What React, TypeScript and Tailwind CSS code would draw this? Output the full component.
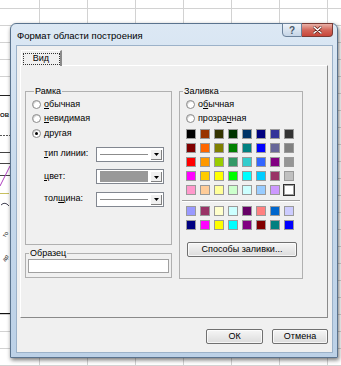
import React from "react";

const palette = [
  ["#000000", "#993300", "#333300", "#003300", "#003366", "#000080", "#333399", "#333333"],
  ["#800000", "#ff6600", "#808000", "#008000", "#008080", "#0000ff", "#666699", "#808080"],
  ["#ff0000", "#ff9900", "#99cc00", "#339966", "#33cccc", "#3366ff", "#800080", "#969696"],
  ["#ff00ff", "#ffcc00", "#ffff00", "#00ff00", "#00ffff", "#00ccff", "#993366", "#c0c0c0"],
  ["#ff99cc", "#ffcc99", "#ffff99", "#ccffcc", "#ccffff", "#99ccff", "#cc99ff", "#ffffff"],
];

const chartColors = [
  ["#9999ff", "#993366", "#ffffcc", "#ccffff", "#660066", "#ff8080", "#0066cc", "#ccccff"],
  ["#000080", "#ff00ff", "#ffff00", "#00ffff", "#800080", "#800000", "#008080", "#0000ff"],
];

function Radio({ checked, children }: { checked?: boolean; children: React.ReactNode }) {
  return (
    <div className="flex items-center h-[14.5px]">
      <span className="w-[9px] h-[9px] rounded-full border border-[#8a8a8a] bg-white shadow-[inset_1px_1px_0_#d4d4d4] flex items-center justify-center">
        {checked && <span className="w-[3px] h-[3px] rounded-full bg-black" />}
      </span>
      <span className="ml-[3px]">{children}</span>
    </div>
  );
}

function Arrow() {
  return (
    <div className="w-[12px] h-full bg-[#f0f0f0] border-l border-t border-white shadow-[inset_-1px_-1px_0_#808080] flex items-center justify-center">
      <svg width="5" height="3" viewBox="0 0 5 3">
        <polygon points="0,0 5,0 2.5,3" fill="#000" />
      </svg>
    </div>
  );
}

function Combo({ fill }: { fill?: boolean }) {
  return (
    <div className="w-[68px] h-[15px] border border-[#828790] bg-white flex p-[1px]">
      <div className="flex-1 flex items-center px-[2px]">
        {fill ? (
          <div className="w-full h-[11px] bg-[#999999]" />
        ) : (
          <div className="w-full h-px bg-[#8c8c8c]" />
        )}
      </div>
      <Arrow />
    </div>
  );
}

function Swatch({ color, selected }: { color: string; selected?: boolean }) {
  return (
    <div
      className={
        selected
          ? "w-[10px] h-[10px] border border-[#a0a0a0] outline outline-1 outline-[#333333]"
          : "w-[10px] h-[10px] border border-[#9a9a9a]"
      }
      style={{ backgroundColor: color }}
    />
  );
}

function Button({ children, className }: { children: React.ReactNode; className?: string }) {
  return (
    <div
      className={
        "h-[15px] flex items-center justify-center rounded-[2px] border border-[#707070] bg-gradient-to-b from-[#f6f6f6] to-[#dcdcdc] shadow-[inset_0_0_0_1px_rgba(255,255,255,0.7)] " +
        (className ?? "")
      }
    >
      {children}
    </div>
  );
}

// piece of the Excel chart peeking out behind the dialog
function LeftChart() {
  return (
    <svg className="absolute left-0 top-0" width="10" height="366" viewBox="0 0 10 366">
      <rect x="0" y="80" width="10" height="234" fill="#ffffff" />
      <line x1="0" y1="95.5" x2="10" y2="95.5" stroke="#222" />
      <text x="0" y="117" fontSize="6" fontWeight="bold" fontFamily="Liberation Sans, sans-serif" fill="#111">ОВ</text>
      <line x1="0" y1="135.5" x2="10" y2="135.5" stroke="#555" strokeDasharray="2 1" />
      <line x1="0" y1="152.5" x2="10" y2="152.5" stroke="#444" />
      <line x1="0" y1="163.5" x2="10" y2="163.5" stroke="#444" />
      <line x1="0" y1="175.5" x2="10" y2="175.5" stroke="#444" />
      <line x1="0" y1="186" x2="10" y2="166" stroke="#b040c0" />
      <line x1="0" y1="193.5" x2="9" y2="193.5" stroke="#c8c060" />
      <path d="M1 205 Q5 201 9 206" stroke="#445" fill="none" />
      <text x="1" y="236" fontSize="6" fontFamily="Liberation Sans, sans-serif" fill="#222" transform="rotate(-55 5 233)">то</text>
      <text x="1" y="260" fontSize="6" fontFamily="Liberation Sans, sans-serif" fill="#222" transform="rotate(-55 5 257)">ар</text>
      <line x1="0" y1="313.5" x2="10" y2="313.5" stroke="#111" />
    </svg>
  );
}

export default function App() {
  return (
    <div className="relative w-[341px] h-[366px] overflow-hidden bg-white [background-image:linear-gradient(to_right,#d2d2d2_1px,transparent_1px),linear-gradient(to_bottom,#d2d2d2_1px,transparent_1px)] [background-size:48px_17px] [background-position:39px_8px] font-['Liberation_Sans',Arial,sans-serif] text-[9px] text-black">
      <LeftChart />

      {/* Dialog window */}
      <div className="absolute left-[10px] top-[23px] w-[328px] h-[335px] rounded-t-[6px] border border-[#5a738e] bg-gradient-to-b from-[#dce8f4] via-[#c6d9ec] to-[#bcd1e7] shadow-[1px_2px_4px_rgba(0,0,0,0.55)] flex flex-col pl-[5px] pr-[4px] pb-[4px]">
        {/* Title bar */}
        <div className="h-[21px] flex items-start">
          <span className="mt-[5px] ml-px text-[9.5px] text-black">Формат области построения</span>
          <div className="ml-auto flex mt-[-1px]">
            <div className="w-[20px] h-[14px] rounded-bl-[4px] border border-[#6b819a] bg-gradient-to-b from-[#eef3f9] to-[#c5d5e6] flex items-center justify-center text-[10px] font-bold text-[#4a5868]">
              ?
            </div>
            <div className="w-[31px] h-[14px] rounded-br-[4px] border border-l-0 border-[#7a3a34] bg-gradient-to-b from-[#e8b1a8] via-[#d2665a] to-[#c8463a] flex items-center justify-center">
              <svg width="9" height="8" viewBox="0 0 9 8">
                <path d="M1 1 L8 7 M8 1 L1 7" stroke="#5b1e18" strokeWidth="2.8" strokeLinecap="round" />
                <path d="M1 1 L8 7 M8 1 L1 7" stroke="#ffffff" strokeWidth="1.6" strokeLinecap="round" />
              </svg>
            </div>
          </div>
        </div>

        {/* Client area */}
        <div className="flex-1 bg-[#f0f0f0] border border-[#9cb2c9] flex flex-col">
          {/* Tab */}
          <div className="ml-[4px] mt-[4px] w-[41px] h-[16px] border-l border-t border-white border-r-2 border-r-[#8a8a8a] bg-[#f0f0f0] relative z-10 flex items-center justify-center pt-[1px]">
            <div className="w-[37px] h-[12px] border border-dotted border-[#333] flex items-center justify-center">
              Вид
            </div>
          </div>

          {/* Tab panel */}
          <div className="ml-[3px] mt-[-1px] w-[308px] h-[253px] border border-white border-r-[#8a8a8a] border-b-[#8a8a8a] flex pl-[4px] pt-[20px]">
            {/* Left column */}
            <div className="w-[147px] flex flex-col">
              <fieldset className="h-[159px] border border-[#b0b0b0] pl-[6px]">
                <legend className="ml-[2px] px-px leading-[11px]">Рамка</legend>
                <Radio><u>о</u>бычная</Radio>
                <Radio><u>н</u>евидимая</Radio>
                <Radio checked><u>д</u>ругая</Radio>
                <div className="mt-[6px] ml-[12px] flex flex-col gap-[7.5px]">
                  <div className="flex items-center">
                    <span className="w-[52px]"><u>т</u>ип линии:</span>
                    <Combo />
                  </div>
                  <div className="flex items-center">
                    <span className="w-[52px]"><u>ц</u>вет:</span>
                    <Combo fill />
                  </div>
                  <div className="flex items-center">
                    <span className="w-[52px]">тол<u>щ</u>ина:</span>
                    <Combo />
                  </div>
                </div>
              </fieldset>

              <fieldset className="mt-[3px] h-[30px] border border-[#b0b0b0] pl-[2px]">
                <legend className="ml-[1px] px-px leading-[11px]">Образец</legend>
                <div className="w-[141px] h-[14px] border border-[#a0a0a0] bg-white" />
              </fieldset>
            </div>

            {/* Right column */}
            <fieldset className="ml-[7px] w-[124px] h-[193px] border border-[#b0b0b0]">
              <legend className="ml-[3px] px-px leading-[11px]">Заливка</legend>
              <div className="pl-[6px]">
                <Radio>о<u>б</u>ычная</Radio>
                <Radio>прозра<u>ч</u>ная</Radio>
              </div>
              <div className="ml-[6px] mt-[3px] grid grid-cols-[repeat(8,10px)] gap-[4px]">
                {palette.flat().map((c, i) => (
                  <Swatch key={i} color={c} selected={i === 39} />
                ))}
              </div>
              <div className="mx-[2px] mt-[5px] border-t border-[#a0a0a0] border-b border-b-white" />
              <div className="ml-[6px] mt-[4px] grid grid-cols-[repeat(8,10px)] gap-[4px]">
                {chartColors.flat().map((c, i) => (
                  <Swatch key={i} color={c} />
                ))}
              </div>
              <Button className="ml-[7px] mt-[12px] w-[110px]">Способы заливки...</Button>
            </fieldset>
          </div>

          {/* Buttons */}
          <div className="ml-[3px] mt-[11px] w-[308px] flex justify-end gap-[9px]">
            <Button className="w-[57px]">ОК</Button>
            <Button className="w-[56px]">Отмена</Button>
          </div>
        </div>
      </div>
    </div>
  );
}
